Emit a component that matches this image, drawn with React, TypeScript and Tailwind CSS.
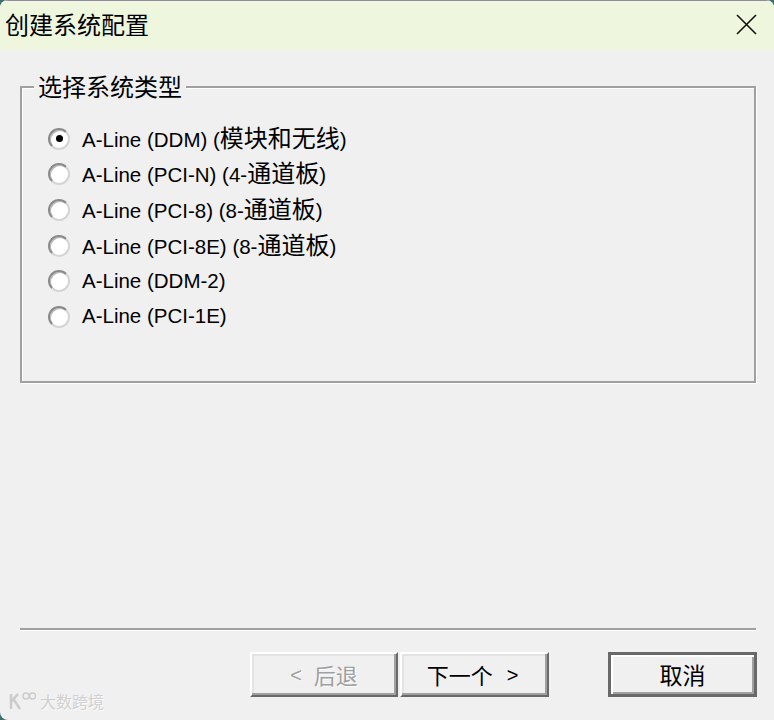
import React from 'react';

const options = [
  'A-Line (DDM) (模块和无线)',
  'A-Line (PCI-N) (4-通道板)',
  'A-Line (PCI-8) (8-通道板)',
  'A-Line (PCI-8E) (8-通道板)',
  'A-Line (DDM-2)',
  'A-Line (PCI-1E)',
];

// split latin / CJK so each run gets its own size
const Label: React.FC<{ text: string }> = ({ text }) => {
  const parts = text.split(/([\u4e00-\u9fff]+)/);
  return (
    <span className="whitespace-pre">
      {parts.map((p, i) =>
        /[\u4e00-\u9fff]/.test(p) ? (
          <span key={i} className="text-[24px]">{p}</span>
        ) : (
          <span key={i}>{p}</span>
        )
      )}
    </span>
  );
};

const Radio: React.FC<{ checked?: boolean }> = ({ checked }) => (
  <div className="w-[22px] h-[22px] shrink-0 rounded-full border-2 border-t-[#8a8a8a] border-l-[#8a8a8a] border-r-[#d4d4d4] border-b-[#d4d4d4] bg-white flex items-center justify-center shadow-[inset_1px_1px_0_#b8b8b8]">
    {checked && <div className="w-[7px] h-[7px] rounded-full bg-black" />}
  </div>
);

const App: React.FC = () => {
  return (
    <div className="w-[774px] h-[720px] bg-[#3d6f6c] overflow-hidden font-['Liberation_Sans','Noto_Sans_CJK_SC',sans-serif]">
      <div className="relative w-full h-full bg-[#f0f0f0] rounded-t-[8px] rounded-bl-[8px] overflow-hidden flex flex-col">
        {/* title bar */}
        <div className="h-[50px] shrink-0 bg-[#eef7de] border-t border-[#8f8f8f] flex items-center justify-between pl-[5px] pr-[17px]">
          <span className="text-[24px] leading-none text-black font-['Noto_Sans_CJK_SC',sans-serif] -mt-[4px]">创建系统配置</span>
          <svg width="21" height="21" viewBox="0 0 21 21" className="-mt-[3px]">
            <path d="M1 1 L20 20 M20 1 L1 20" stroke="#111" strokeWidth="1.6" fill="none" />
          </svg>
        </div>

        <div className="pl-5 pr-[18px] flex flex-col">
          {/* group box */}
          <div className="relative mt-[36px] h-[297px] border-2 border-[#a0a0a0] shadow-[inset_1px_1px_0_#fff,1px_1px_0_#fff] pt-[33px] pl-[26px]">
            <span className="absolute left-[12px] -top-[17px] px-[4px] bg-[#f0f0f0] text-[24px] leading-[30px] text-black font-['Noto_Sans_CJK_SC',sans-serif]">
              选择系统类型
            </span>
            <div className="flex flex-col">
              {options.map((o, i) => (
                <div key={o} className="h-[35.6px] flex items-center gap-[12px] text-[20.5px] text-black">
                  <Radio checked={i === 0} />
                  <Label text={o} />
                </div>
              ))}
            </div>
          </div>

          {/* separator */}
          <div className="mt-[245px] h-[2px] bg-[#a0a0a0] shadow-[0_1px_0_#fff]" />

          {/* buttons */}
          <div className="mt-[22px] flex">
            <button className="shrink-0 ml-[230px] w-[148px] h-[45px] bg-[#f0f0f0] border-2 border-t-white border-l-white border-r-[#696969] border-b-[#696969] shadow-[inset_-2px_-2px_0_#a0a0a0,inset_2px_2px_0_#e3e3e3] flex items-center justify-center gap-[12px] text-[22px] text-[#a0a0a0] [text-shadow:1px_1px_0_#fff] font-['Noto_Sans_CJK_SC',sans-serif]">
              <span className="text-[20px] font-['Liberation_Sans',sans-serif]">&lt;</span>
              <span>后退</span>
            </button>
            <button className="shrink-0 ml-[2px] w-[149px] h-[45px] bg-[#f0f0f0] border-2 border-t-white border-l-white border-r-[#696969] border-b-[#696969] shadow-[inset_-2px_-2px_0_#a0a0a0,inset_2px_2px_0_#e3e3e3] flex items-center justify-center gap-[14px] pr-[4px] text-[22px] text-black font-['Noto_Sans_CJK_SC',sans-serif]">
              <span>下一个</span>
              <span className="text-[20px] font-['Liberation_Sans',sans-serif]">&gt;</span>
            </button>
            <button className="shrink-0 ml-[59px] w-[149px] h-[45px] bg-[#f0f0f0] border-[3px] border-[#696969] shadow-[inset_2px_2px_0_#fff,inset_-2px_-2px_0_#a0a0a0] flex items-center justify-center text-[23px] text-black font-['Noto_Sans_CJK_SC',sans-serif]">
              取消
            </button>
          </div>
        </div>

        {/* watermark overlay */}
        <div className="absolute left-[8px] bottom-[7px] flex items-center gap-[4px] opacity-80">
          <svg width="28" height="20" viewBox="0 0 28 20">
            <path d="M3 3 L3 18 M3 11 L10 3 M6 9 L12 18" stroke="#c4c4c4" strokeWidth="2.5" fill="none" />
            <circle cx="18" cy="5" r="3" stroke="#c4c4c4" strokeWidth="1.5" fill="none" />
            <circle cx="24.5" cy="5" r="3" stroke="#c4c4c4" strokeWidth="1.5" fill="none" />
          </svg>
          <span className="text-[16px] text-[#c8c8c8] [text-shadow:1px_1px_0_#fff] font-['Noto_Sans_CJK_SC',sans-serif]">大数跨境</span>
        </div>
      </div>
    </div>
  );
};

export default App;
